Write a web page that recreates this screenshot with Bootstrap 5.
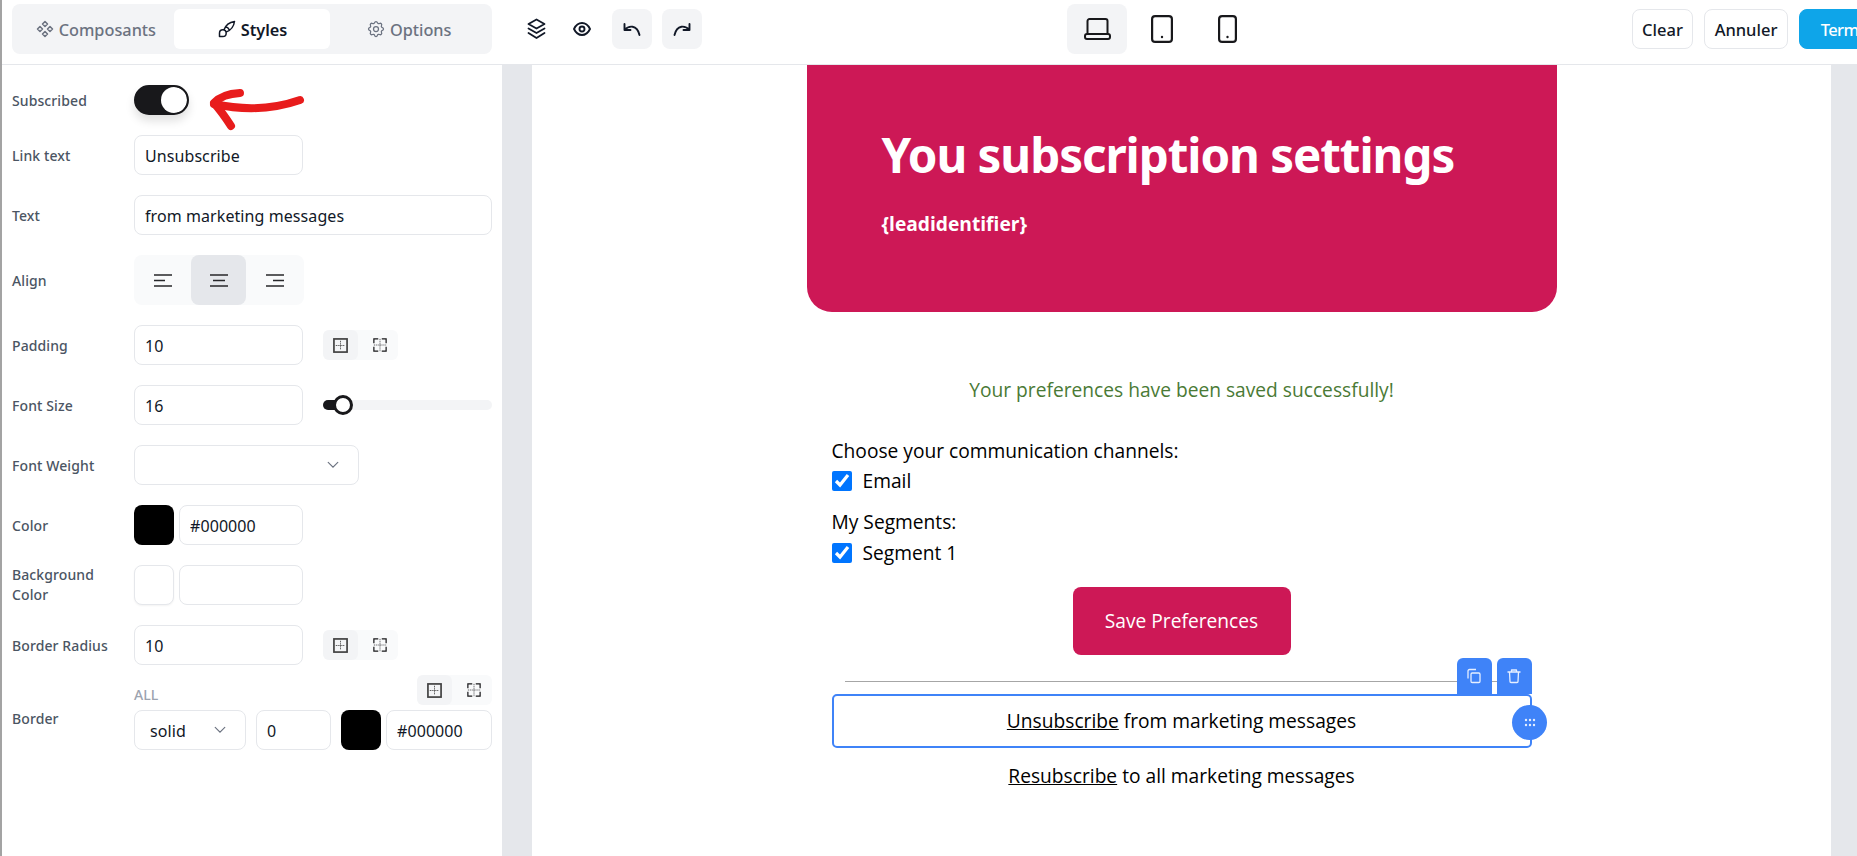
<!DOCTYPE html>
<html lang="fr">
<head>
<meta charset="utf-8">
<title>Builder</title>
<link href="https://cdn.jsdelivr.net/npm/bootstrap@5.3.0/dist/css/bootstrap.min.css" rel="stylesheet">
<style>
html,body{height:100%;overflow:hidden}
body{font-family:"Noto Sans","Liberation Sans",sans-serif;color:#111827;background:#fff}
svg{display:block}
.shell{width:1857px;height:856px;border-left:2px solid #a3a3a3;overflow:hidden;position:relative}
.topbar{height:65px;border-bottom:1px solid #e5e7eb;padding:0 0 6px 10px}
.tabs-box{width:480px;height:50px;background:#f3f4f6;border-radius:8px;padding:5px;flex:0 0 auto}
.tab-item{height:40px;border-radius:6px;border:0;background:transparent;color:#6b7280;font-size:16.3px;font-weight:500;padding:0;flex:1 1 0}
.tab-item.on{background:#fff;color:#111827;font-weight:600}
.tab-txt{padding-top:3px}
.tools{margin-left:22px;flex:0 0 auto}
.plain-ico{width:45px;height:40px;color:#111827}
.sq-btn{width:40px;height:40px;border-radius:8px;background:#f3f4f6;color:#111827;border:0;padding:0}
.sq-first{margin-left:8px}
.sq-next{margin-left:10px}
.dev-group{margin-left:365px;gap:5px;flex:0 0 auto}
.dev-btn{width:60px;height:50px;border:0;border-radius:8px;background:transparent;padding:0;color:#18181b}
.dev-btn.on{background:#f3f4f6}
.right-group{margin-left:375px;gap:11px;flex:0 0 auto}
.act-btn{height:40px;border:1px solid #e5e7eb;border-radius:8px;background:#fff;color:#111827;font-size:16.5px;font-weight:500;padding:3px 0 0;flex:0 0 auto}
.w-clear{width:61px}.w-ann{width:84px}
.w-term{width:110px;background:#0ea5e9;border-color:#0ea5e9;color:#fff;letter-spacing:-.6px}
.main-area{height:791px}
.side{width:500px;padding:20px 10px 0 10px;flex:0 0 auto;background:#fff}
.strip{background:#e5e7eb;flex:0 0 auto}
.s30{width:30px}.s26{width:26px}
.canvas{width:1299px;flex:0 0 auto;background:#fff}
.prow{margin-bottom:20px}
.plabel{width:122px;flex:0 0 auto;font-size:14px;line-height:20px;color:#4b5563;font-weight:500;padding:1px 18px 0 0;letter-spacing:.1px}
.plabel-two{padding-top:0}
.fld{height:40px;border:1px solid #e5e7eb;border-radius:8px;font-size:16px;padding:2px 10px 0;color:#111827;box-shadow:none;background-color:#fff;letter-spacing:.08px}
.w169{width:169px}.w358{width:358px}.w225{width:225px}.w124{width:124px}.w112{width:112px}.w75{width:75px}.w106{width:106px}
.fsel{background-image:url("data:image/svg+xml,%3csvg xmlns='http://www.w3.org/2000/svg' viewBox='0 0 16 16'%3e%3cpath fill='none' stroke='%236b7280' stroke-linecap='round' stroke-width='1.3' d='m2.5 5 5.5 5.5L13.500 5'/%3e%3c/svg%3e");background-position:right 18px center;background-size:14px 14px;padding-left:15px}
.swatch{width:40px;height:40px;border-radius:8px;flex:0 0 auto}
.sw-black{background:#000}
.sw-white{background:#fff;border:1px solid #e5e7eb;box-shadow:0 1px 2px rgba(0,0,0,.05)}
.sw-switch{padding:0;margin:0;min-height:0;height:30px}
.sw-switch .form-check-input{width:55px;height:30px;margin:0;background-color:#18181b;border:2px solid #18181b;box-shadow:0 6px 10px rgba(0,0,0,.12);background-image:url("data:image/svg+xml,%3csvg xmlns='http://www.w3.org/2000/svg' viewBox='-4 -4 8 8'%3e%3ccircle r='4' fill='%23fff'/%3e%3c/svg%3e");background-position:right center}
.align-box{width:170px;height:50px;background:#f9fafb;border-radius:8px}
.al-btn{height:50px;border:0;background:transparent;border-radius:8px;padding:0;color:#27272a;flex:0 0 auto}
.al-a{width:57px}.al-b{width:55px}.al-c{width:58px}
.al-btn.on{background:#e5e7eb}
.split-box{width:75px;height:30px;background:#f9fafb;border-radius:6px;flex:0 0 auto}
.split-btn{height:30px;border:0;padding:0;background:transparent;border-radius:6px;color:#27272a}
.sb-a{width:35px}.sb-b{width:44px;margin-right:-4px}
.split-btn.on{background:#f3f4f6;color:#404040}
.slide-track{width:169px;height:10px;background:#f3f4f6;border-radius:5px;position:relative;flex:0 0 auto}
.slide-fill{height:10px;background:#18181b;border-radius:5px}
.slide-thumb{position:absolute;left:10px;top:-5px;width:20px;height:20px;border-radius:50%;background:#fff;border:3px solid #18181b}
.all-tag{font-size:14px;font-weight:500;color:#9ca3af;line-height:20px;padding-top:10px}
.split-offset{margin-left:20px}
.ms-5px{margin-left:5px}
.gap10{margin-left:10px}
.mb-10px{margin-bottom:10px}
.border-lab{margin-top:33px}
.border-head{height:35px}
.mail{width:750px;margin:0 auto;font-family:"Open Sans","Noto Sans",sans-serif;font-size:19.2px;color:#000}
.hero{height:247px;background:#cd1856;border-radius:0 0 25px 25px;padding:60px 0 0 75px;color:#fff}
.hero-title{font-size:47.5px;line-height:60px;font-weight:700;margin:0;font-family:"Noto Sans",sans-serif;letter-spacing:-1.05px}
.hero-sub{font-size:19.2px;line-height:24px;font-weight:700;margin-top:27px}
.mail-body{padding:0 25px}
.ok-msg{margin-top:66px;line-height:24px;color:#4a7a35;text-align:center}
.ln{line-height:24px}
.chan{margin-top:37px}
.chk-row{margin-top:6px;height:24px}
.chk-row .form-check-input{appearance:auto;-webkit-appearance:auto;accent-color:#0075ff;width:20px;height:20px;margin:0 11px 0 0;border:0;background:none;flex:0 0 auto;box-shadow:none}
.seg{margin-top:17px}
.seg-row{margin-top:7px}
.save-btn{display:block;width:218px;height:68px;margin:22px auto 0;background:#cd1856;border:0;color:#fff;font-size:19.2px;font-weight:500;border-radius:8px;padding:0}
.rule{height:1px;background:#a6a6a6;margin:26px 12px 0 13px}
.sel-block{margin-top:12px;height:54px;border:2.5px solid #3f83f8;border-radius:5px;position:relative;text-align:center;line-height:49px}
.mail a{color:#000;text-decoration:underline}
.blk-btn{position:absolute;top:-38px;width:35px;height:36px;background:#3f83f8;border-radius:6px 6px 0 0;color:#e6efff;line-height:0}
.b-copy{right:38px}.b-del{right:-2px}
.drag{position:absolute;right:-17.500px;top:9px;width:35px;height:35px;border-radius:50%;background:#3f83f8;color:#e6efff;line-height:0}
.resub{margin-top:16px;line-height:24px;text-align:center}
.arrow-note{position:absolute;left:0;top:0;pointer-events:none}
</style>
</head>
<body>
<svg width="0" height="0" class="position-absolute">
  <symbol id="i-all" viewBox="0 0 16 16"><rect x="1" y="1" width="14" height="14" fill="none" stroke="currentColor" stroke-width="1.800"/><path d="M8 3v10M3 8h10" stroke="#222" stroke-width="1" stroke-dasharray="1 1" fill="none"/></symbol>
  <symbol id="i-split" viewBox="0 0 16 16"><path d="M1 6V1h5M10 1h5v5M15 10v5h-5M6 15H1v-5" fill="none" stroke="#18181b" stroke-width="1.400"/><path d="M8 1v14M1 8h14" stroke="#18181b" stroke-width="1" stroke-dasharray="1 1.200" fill="none"/></symbol>
</svg>
<div class="shell">
  <div class="topbar d-flex align-items-center">
    <div class="tabs-box d-flex">
      <button class="tab-item d-flex align-items-center justify-content-center gap-1">
        <svg width="20" height="20" viewBox="0 0 24 24" fill="none" stroke="currentColor" stroke-width="1.800" stroke-linejoin="round"><path d="M3 12l3 3l3 -3l-3 -3z M15 12l3 3l3 -3l-3 -3z M9 6l3 3l3 -3l-3 -3z M9 18l3 3l3 -3l-3 -3z"/></svg><span class="tab-txt">Composants</span></button>
      <button class="tab-item on d-flex align-items-center justify-content-center gap-1">
        <svg width="20" height="20" viewBox="0 0 24 24" fill="none" stroke="currentColor" stroke-width="1.800" stroke-linecap="round" stroke-linejoin="round"><path d="M3 21v-4a4 4 0 1 1 4 4h-4 M21 3a16 16 0 0 0 -12.800 10.200 M21 3a16 16 0 0 1 -10.200 12.800 M10.600 9a9 9 0 0 1 4.400 4.400"/></svg><span class="tab-txt">Styles</span></button>
      <button class="tab-item d-flex align-items-center justify-content-center gap-1">
        <svg width="20" height="20" viewBox="0 0 24 24" fill="none" stroke="currentColor" stroke-width="1.500" stroke-linecap="round" stroke-linejoin="round"><path d="M10.325 4.317c.426 -1.756 2.924 -1.756 3.350 0a1.724 1.724 0 0 0 2.573 1.066c1.543 -.94 3.310 .826 2.370 2.370a1.724 1.724 0 0 0 1.065 2.572c1.756 .426 1.756 2.924 0 3.350a1.724 1.724 0 0 0 -1.066 2.573c.94 1.543 -.826 3.310 -2.370 2.370a1.724 1.724 0 0 0 -2.572 1.065c-.426 1.756 -2.924 1.756 -3.350 0a1.724 1.724 0 0 0 -2.573 -1.066c-1.543 .94 -3.310 -.826 -2.370 -2.370a1.724 1.724 0 0 0 -1.065 -2.572c-1.756 -.426 -1.756 -2.924 0 -3.350a1.724 1.724 0 0 0 1.066 -2.573c-.94 -1.543 .826 -3.310 2.370 -2.370c1 .608 2.296 .07 2.572 -1.065z"/><circle cx="12" cy="12" r="3"/></svg><span class="tab-txt">Options</span></button>
    </div>
    <div class="tools d-flex align-items-center">
      <div class="plain-ico d-flex align-items-center justify-content-center">
        <svg width="19" height="22" viewBox="0 0 19 22" fill="none" stroke="currentColor" stroke-width="1.800" stroke-linejoin="round" stroke-linecap="round"><path d="M9.500 1.500L1.500 6l8 4.500l8-4.500z M1.500 10.500l8 4.500l8-4.500 M1.500 15l8 5l8-5"/></svg>
      </div>
      <div class="plain-ico d-flex align-items-center justify-content-center">
        <svg width="18" height="14" viewBox="0 0 18 14" fill="none" stroke="currentColor" stroke-width="1.900"><path d="M1 7c1.800-3.800 4.500-6 8-6s6.200 2.200 8 6c-1.800 3.800-4.500 6-8 6s-6.200-2.200-8-6z"/><circle cx="9" cy="7" r="2.500"/></svg>
      </div>
      <button class="sq-btn sq-first d-flex align-items-center justify-content-center" aria-label="Undo">
        <svg width="18" height="13" viewBox="0 0 18 13" fill="none" stroke="currentColor" stroke-width="1.900" stroke-linecap="round" stroke-linejoin="round"><path d="M1.500 1v6h6M1.500 7c4-4.500 12.500-6 15 5"/></svg>
      </button>
      <button class="sq-btn sq-next d-flex align-items-center justify-content-center" aria-label="Redo">
        <svg width="18" height="13" viewBox="0 0 18 13" fill="none" stroke="currentColor" stroke-width="1.900" stroke-linecap="round" stroke-linejoin="round"><path d="M16.500 1v6h-6M16.500 7c-4-4.500-12.500-6-15 5"/></svg>
      </button>
    </div>
    <div class="dev-group d-flex">
      <button class="dev-btn on d-flex align-items-center justify-content-center" aria-label="Desktop">
        <svg width="27" height="22" viewBox="0 0 27 22" fill="none" stroke="currentColor" stroke-width="2" stroke-linejoin="round"><path d="M3.500 16V3a2 2 0 0 1 2-2h16a2 2 0 0 1 2 2v13"/><rect x="1" y="16" width="25" height="5" rx="2"/></svg>
      </button>
      <button class="dev-btn d-flex align-items-center justify-content-center" aria-label="Tablet">
        <svg width="22" height="28" viewBox="0 0 22 28" fill="none" stroke="currentColor" stroke-width="2.200"><rect x="1.100" y="1.100" width="19.800" height="25.800" rx="3"/><circle cx="11" cy="22" r="1.200" fill="currentColor" stroke="none"/></svg>
      </button>
      <button class="dev-btn d-flex align-items-center justify-content-center" aria-label="Phone">
        <svg width="19" height="28" viewBox="0 0 19 28" fill="none" stroke="currentColor" stroke-width="2.200"><rect x="1.100" y="1.100" width="16.800" height="25.800" rx="3"/><circle cx="9.500" cy="22" r="1.200" fill="currentColor" stroke="none"/></svg>
      </button>
    </div>
    <div class="right-group d-flex">
      <button class="act-btn w-clear">Clear</button>
      <button class="act-btn w-ann">Annuler</button>
      <button class="act-btn w-term">Terminer</button>
    </div>
  </div>

  <div class="main-area d-flex">
    <aside class="side">
      <div class="prow d-flex align-items-center">
        <div class="plabel">Subscribed</div>
        <div class="form-check form-switch sw-switch"><input class="form-check-input" type="checkbox" role="switch" checked aria-label="Subscribed"></div>
      </div>
      <div class="prow d-flex align-items-center">
        <div class="plabel">Link text</div>
        <input class="form-control fld w169" value="Unsubscribe" aria-label="Link text">
      </div>
      <div class="prow d-flex align-items-center">
        <div class="plabel">Text</div>
        <input class="form-control fld w358" value="from marketing messages" aria-label="Text">
      </div>
      <div class="prow d-flex align-items-center">
        <div class="plabel">Align</div>
        <div class="align-box d-flex">
          <button class="al-btn al-a d-flex align-items-center justify-content-center" aria-label="Left"><svg width="18" height="13" viewBox="0 0 18 13" stroke="currentColor" stroke-width="1.600"><path d="M0 1h18M0 6.500h11M0 12h18"/></svg></button>
          <button class="al-btn al-b on d-flex align-items-center justify-content-center" aria-label="Center"><svg width="18" height="13" viewBox="0 0 18 13" stroke="currentColor" stroke-width="1.600"><path d="M0 1h18M3 6.500h12M0 12h18"/></svg></button>
          <button class="al-btn al-c d-flex align-items-center justify-content-center" aria-label="Right"><svg width="18" height="13" viewBox="0 0 18 13" stroke="currentColor" stroke-width="1.600"><path d="M0 1h18M7 6.500h11M0 12h18"/></svg></button>
        </div>
      </div>
      <div class="prow d-flex align-items-center">
        <div class="plabel">Padding</div>
        <input class="form-control fld w169" value="10" aria-label="Padding">
        <div class="split-box d-flex split-offset">
          <button class="split-btn sb-a on d-flex align-items-center justify-content-center" aria-label="All"><svg width="15" height="15"><use href="#i-all"/></svg></button>
          <button class="split-btn sb-b d-flex align-items-center justify-content-center" aria-label="Split"><svg width="14" height="14"><use href="#i-split"/></svg></button>
        </div>
      </div>
      <div class="prow d-flex align-items-center">
        <div class="plabel">Font Size</div>
        <input class="form-control fld w169" value="16" aria-label="Font Size">
        <div class="slide-track split-offset"><div class="slide-fill" style="width:20px"></div><div class="slide-thumb"></div></div>
      </div>
      <div class="prow d-flex align-items-center">
        <div class="plabel">Font Weight</div>
        <select class="form-select fld fsel w225" aria-label="Font Weight"><option></option></select>
      </div>
      <div class="prow d-flex align-items-center">
        <div class="plabel">Color</div>
        <div class="swatch sw-black"></div>
        <input class="form-control fld w124 ms-5px" value="#000000" aria-label="Color">
      </div>
      <div class="prow d-flex align-items-center">
        <div class="plabel plabel-two">Background Color</div>
        <div class="swatch sw-white"></div>
        <input class="form-control fld w124 ms-5px" aria-label="Background Color">
      </div>
      <div class="prow d-flex align-items-center mb-10px">
        <div class="plabel">Border Radius</div>
        <input class="form-control fld w169" value="10" aria-label="Border Radius">
        <div class="split-box d-flex split-offset">
          <button class="split-btn sb-a on d-flex align-items-center justify-content-center" aria-label="All"><svg width="15" height="15"><use href="#i-all"/></svg></button>
          <button class="split-btn sb-b d-flex align-items-center justify-content-center" aria-label="Split"><svg width="14" height="14"><use href="#i-split"/></svg></button>
        </div>
      </div>
      <div class="d-flex">
        <div class="plabel border-lab">Border</div>
        <div class="flex-fill">
          <div class="d-flex justify-content-between align-items-start border-head">
            <div class="all-tag">ALL</div>
            <div class="split-box d-flex">
              <button class="split-btn sb-a on d-flex align-items-center justify-content-center" aria-label="All"><svg width="15" height="15"><use href="#i-all"/></svg></button>
              <button class="split-btn sb-b d-flex align-items-center justify-content-center" aria-label="Split"><svg width="14" height="14"><use href="#i-split"/></svg></button>
            </div>
          </div>
          <div class="d-flex align-items-center">
            <select class="form-select fld fsel w112" aria-label="Border style"><option>solid</option></select>
            <input class="form-control fld w75 gap10" value="0" aria-label="Border width">
            <div class="swatch sw-black gap10"></div>
            <input class="form-control fld w106 ms-5px" value="#000000" aria-label="Border color">
          </div>
        </div>
      </div>
    </aside>
    <div class="strip s30"></div>
    <main class="canvas">
      <div class="mail">
        <div class="hero">
          <h1 class="hero-title">You subscription settings</h1>
          <div class="hero-sub">{leadidentifier}</div>
        </div>
        <div class="mail-body">
          <div class="ok-msg">Your preferences have been saved successfully!</div>
          <div class="ln chan">Choose your communication channels:</div>
          <div class="chk-row d-flex align-items-center"><input class="form-check-input" type="checkbox" checked aria-label="Email">Email</div>
          <div class="ln seg">My Segments:</div>
          <div class="chk-row seg-row d-flex align-items-center"><input class="form-check-input" type="checkbox" checked aria-label="Segment 1">Segment 1</div>
          <button class="save-btn">Save Preferences</button>
          <div class="rule"></div>
          <div class="sel-block">
            <a href="#">Unsubscribe</a> from marketing messages
            <div class="blk-btn b-copy d-flex align-items-center justify-content-center"><svg width="16" height="16" viewBox="0 0 16 16" fill="none" stroke="currentColor" stroke-width="1.300" stroke-linejoin="round"><rect x="5" y="5" width="9" height="9.500" rx="1.200"/><path d="M2 10.500V3a1.500 1.500 0 0 1 1.500-1.500H10"/></svg></div>
            <div class="blk-btn b-del d-flex align-items-center justify-content-center"><svg width="16" height="16" viewBox="0 0 16 16" fill="none" stroke="currentColor" stroke-width="1.300" stroke-linejoin="round"><path d="M1.500 4h13M5.500 4V2h5v2M3.500 4l.5 9.500a1 1 0 0 0 1 1h6a1 1 0 0 0 1-1L12.500 4"/></svg></div>
            <div class="drag d-flex align-items-center justify-content-center"><svg width="12" height="9" viewBox="0 0 12 9" fill="currentColor"><circle cx="2" cy="2" r="1.200"/><circle cx="6" cy="2" r="1.200"/><circle cx="10" cy="2" r="1.200"/><circle cx="2" cy="7" r="1.200"/><circle cx="6" cy="7" r="1.200"/><circle cx="10" cy="7" r="1.200"/></svg></div>
          </div>
          <div class="resub"><a href="#">Resubscribe</a> to all marketing messages</div>
        </div>
      </div>
    </main>
    <div class="strip s26"></div>
  </div>
  <svg class="arrow-note" width="320" height="140" viewBox="0 0 320 140" fill="none" stroke="#e81c1c" stroke-linecap="round" stroke-linejoin="round"><path stroke-width="8" d="M298 100 Q258 114 212 104"/><path stroke-width="8" d="M238 93 Q220 94 212 103 Q220 112 229 126"/></svg>
</div>
<script src="https://cdn.jsdelivr.net/npm/bootstrap@5.3.0/dist/js/bootstrap.bundle.min.js"></script>
</body>
</html>
